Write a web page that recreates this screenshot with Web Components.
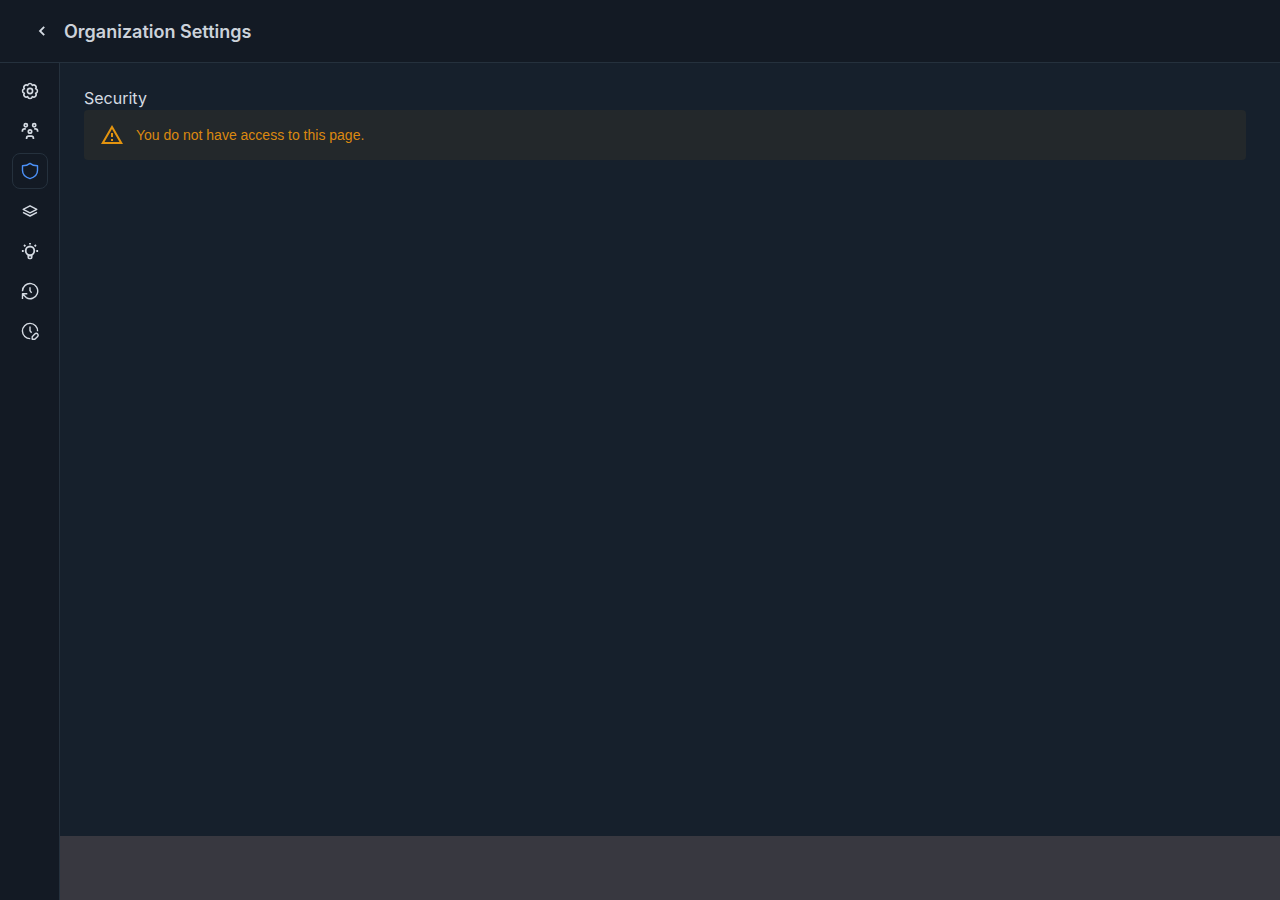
<!DOCTYPE html>
<html lang="en">
<head>
<meta charset="utf-8">
<meta name="viewport" content="width=device-width, initial-scale=1">
<title>Organization Settings</title>
<style>
  :root {
    --panel: #131a24;
    --page: #16202c;
    --line: #25313d;
    --text: #d5dbe3;
    --heading: #ccd2da;
    --accent: #4c91f7;
    --warning: #db8810;
    --warning-icon: #e3940f;
    --warning-bg: #23282b;
    --footer: #383840;
  }

  body {
    margin: 0;
    background: var(--page);
    color: var(--text);
    font-family: Inter, "Liberation Sans", sans-serif;
  }
</style>
</head>
<body>
<settings-layout>
  <page-header slot="header">Organization Settings</page-header>
  <side-nav slot="nav">
    <nav-item icon="gear" label="General"></nav-item>
    <nav-item icon="people" label="Members"></nav-item>
    <nav-item icon="shield" label="Security" active></nav-item>
    <nav-item icon="layers" label="Workspaces"></nav-item>
    <nav-item icon="bulb" label="Insights"></nav-item>
    <nav-item icon="history" label="History"></nav-item>
    <nav-item icon="clock" label="Retention"></nav-item>
  </side-nav>
  <settings-section>
    <span slot="title">Security</span>
    <alert-message>You do not have access to this page.</alert-message>
  </settings-section>
</settings-layout>

<script>
const ICONS = {
  gear: `
    <path d="M6.7 3.4A2.35 2.35 0 0 1 11.3 3.4 2.35 2.35 0 0 1 14.6 6.7 2.35 2.35 0 0 1 14.6 11.3 2.35 2.35 0 0 1 11.3 14.6 2.35 2.35 0 0 1 6.7 14.6 2.35 2.35 0 0 1 3.4 11.3 2.35 2.35 0 0 1 3.4 6.7 2.35 2.35 0 0 1 6.7 3.4Z" stroke-width="1.6"/>
    <circle cx="9" cy="9" r="2.6" stroke-width="1.6"/>`,
  people: `
    <g stroke-width="1.7">
      <circle cx="4.8" cy="3.2" r="1.6"/>
      <circle cx="13.2" cy="3.2" r="1.6"/>
      <circle cx="9" cy="9.5" r="1.7"/>
      <path d="M1.4 9.8V9c0-1.4.9-2.2 2.3-2.2h1.1M16.6 9.8V9c0-1.4-.9-2.2-2.3-2.2h-1.1M5.6 17v-.8c0-1.3.9-2.1 2-2.1h2.8c1.1 0 2 .8 2 2.1v.8"/>
    </g>`,
  shield: `
    <path d="M9 1.4C6.9 3.1 4.2 3.8 1.5 3.8v4.7c0 4.3 3.3 6.9 7.5 8.1 4.2-1.2 7.5-3.8 7.5-8.1V3.8C13.8 3.8 11.1 3.1 9 1.4Z" stroke-width="1.4"/>`,
  layers: `
    <path d="M9 3.8 15.8 7.3 9 10.8 2.2 7.3Z" stroke-width="1.4"/>
    <path d="m2 10.3 7 3.7 7-3.7" stroke-width="1.5"/>`,
  bulb: `
    <circle cx="9" cy="8.8" r="4.3" stroke-width="1.8"/>
    <path d="M7.2 12.7v2.6c0 .8.4 1.2 1.1 1.2h1.4c.7 0 1.1-.4 1.1-1.2v-2.6M7.2 13.8h3.6" stroke-width="1.5"/>
    <path d="M9 .9v1.5M3 3l1.4 1.4M15 3l-1.4 1.4M.9 9h1.8M15.3 9h1.8" stroke-width="1.8"/>`,
  history: `
    <path d="M1.5 9.3A7.6 7.6 0 1 1 5.2 15.6L1.7 12.1M1.5 17v-5.2h4.8" stroke-width="1.4"/>
    <path d="M9 5.2v3.5l1.6 2.2" stroke-width="1.4"/>`,
  clock: `
    <path d="M16.6 9.3A7.6 7.6 0 1 0 9.3 16.6" stroke-width="1.4"/>
    <path d="M9 4.5v4.3l1.6 2" stroke-width="1.4"/>
    <path d="M11.2 17.3v-2.6l2.6-2.6c.9-.9 2-.9 2.8-.2.7.8.7 1.9-.2 2.8l-2.6 2.6Z" stroke-width="1.4"/>`
};

class SettingsLayout extends HTMLElement {
  constructor() {
    super();
    this.attachShadow({mode: 'open'}).innerHTML = `
      <style>
        :host {
          display: flex;
          flex-direction: column;
          min-height: 100vh;
        }

        .body {
          display: flex;
          flex: 1;
        }

        .main {
          display: flex;
          flex: 1;
          flex-direction: column;
          min-width: 0;
        }

        main {
          flex: 1;
          padding: 24px 34px 24px 24px;
        }

        footer {
          height: 64px;
          background: var(--footer);
        }
      </style>
      <slot name="header"></slot>
      <div class="body">
        <slot name="nav"></slot>
        <div class="main">
          <main><slot></slot></main>
          <footer></footer>
        </div>
      </div>
    `;
  }
}

class PageHeader extends HTMLElement {
  constructor() {
    super();
    this.attachShadow({mode: 'open'}).innerHTML = `
      <style>
        :host {
          display: block;
          border-bottom: 1px solid var(--line);
          background: var(--panel);
        }

        header {
          display: flex;
          align-items: center;
          gap: 4px;
          height: 62px;
          padding: 0 24px;
        }

        button {
          display: grid;
          place-items: center;
          width: 36px;
          height: 36px;
          padding: 0;
          border: 0;
          background: none;
          color: inherit;
          cursor: pointer;
        }

        svg {
          display: block;
        }

        h1 {
          margin: 0;
          color: var(--heading);
          font-size: 18px;
          font-weight: 600;
          line-height: 25px;
        }
      </style>
      <header>
        <button type="button" aria-label="Back">
          <svg width="16" height="16" viewBox="0 0 16 16" fill="none" stroke="currentColor" stroke-width="1.8">
            <path d="M10.2 3.8 6 8l4.2 4.2"/>
          </svg>
        </button>
        <h1><slot></slot></h1>
      </header>
    `;
  }
}

class SideNav extends HTMLElement {
  constructor() {
    super();
    this.attachShadow({mode: 'open'}).innerHTML = `
      <style>
        :host {
          display: block;
          border-right: 1px solid var(--line);
          background: var(--panel);
        }

        nav {
          display: flex;
          flex-direction: column;
          gap: 4px;
          padding: 10px 11px 10px 12px;
        }
      </style>
      <nav aria-label="Settings"><slot></slot></nav>
    `;
  }
}

class NavItem extends HTMLElement {
  constructor() {
    super();
    this.attachShadow({mode: 'open'});
  }

  connectedCallback() {
    this.shadowRoot.innerHTML = `
      <style>
        :host {
          display: block;
        }

        a {
          display: grid;
          place-items: center;
          box-sizing: border-box;
          width: 36px;
          height: 36px;
          border: 1px solid transparent;
          border-radius: 8px;
          color: inherit;
        }

        :host([active]) a {
          border-color: var(--line);
          color: var(--accent);
        }

        svg {
          display: block;
        }
      </style>
      <a href="#" aria-label="${this.getAttribute('label')}">
        <svg width="18" height="18" viewBox="0 0 18 18" fill="none" stroke="currentColor" stroke-linejoin="round">
          ${ICONS[this.getAttribute('icon')]}
        </svg>
      </a>
    `;
  }
}

class SettingsSection extends HTMLElement {
  constructor() {
    super();
    this.attachShadow({mode: 'open'}).innerHTML = `
      <style>
        :host {
          display: block;
        }

        h2 {
          margin: 0;
          font-size: 16px;
          font-weight: 400;
          line-height: 23px;
        }
      </style>
      <h2><slot name="title"></slot></h2>
      <slot></slot>
    `;
  }
}

class AlertMessage extends HTMLElement {
  constructor() {
    super();
    this.attachShadow({mode: 'open'}).innerHTML = `
      <style>
        :host {
          display: block;
        }

        div {
          display: flex;
          align-items: center;
          gap: 12px;
          padding: 13px 16px;
          border-radius: 4px;
          background: var(--warning-bg);
          color: var(--warning);
          font: 14px/24px "Liberation Sans", Arial, sans-serif;
        }

        svg {
          flex: none;
          color: var(--warning-icon);
        }
      </style>
      <div role="alert">
        <svg width="24" height="24" viewBox="0 0 24 24" fill="currentColor" aria-hidden="true">
          <path fill-rule="evenodd" d="M12 2 23 21H1ZM12 6 4.5 19h15Z"/>
          <path d="M11 10h2v4h-2zM11 16h2v2h-2z"/>
        </svg>
        <span><slot></slot></span>
      </div>
    `;
  }
}

customElements.define('settings-layout', SettingsLayout);
customElements.define('page-header', PageHeader);
customElements.define('side-nav', SideNav);
customElements.define('nav-item', NavItem);
customElements.define('settings-section', SettingsSection);
customElements.define('alert-message', AlertMessage);
</script>
</body>
</html>
